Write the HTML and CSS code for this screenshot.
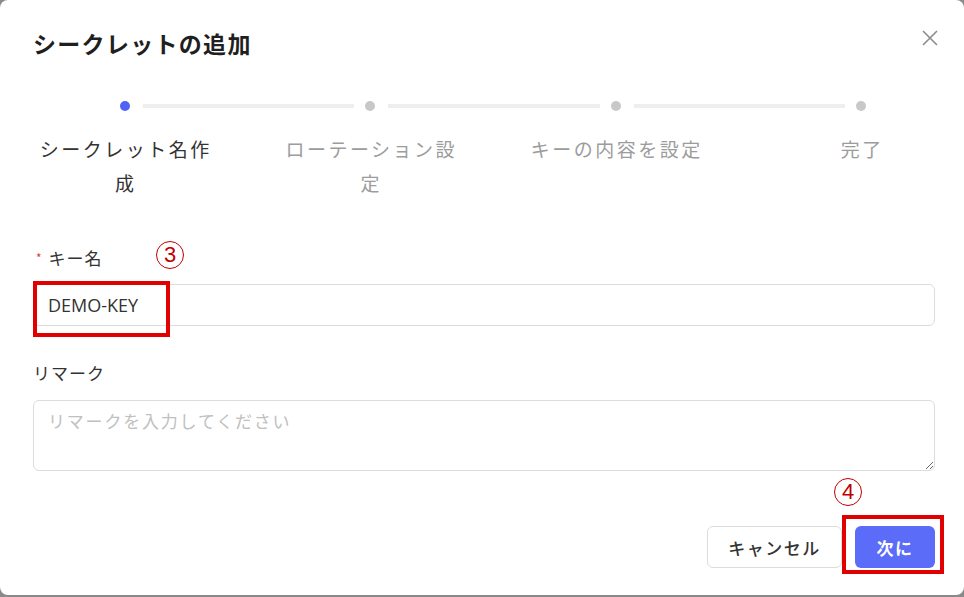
FILE: index.html
```html
<!DOCTYPE html>
<html lang="ja">
<head>
<meta charset="utf-8">
<title>シークレットの追加</title>
<link rel="stylesheet" href="styles.css">
</head>
<body>
<div class="dialog">
  <div class="header">
    <h1 class="title">シークレットの追加</h1>
    <svg class="close" width="16" height="16" viewBox="0 0 16 16"><path d="M1 1L15 15M15 1L1 15" stroke="#8c8c8c" stroke-width="1.6" fill="none"/></svg>
  </div>

  <div class="steps">
    <div class="track">
      <span class="dot active"></span><span class="line"></span>
      <span class="dot"></span><span class="line"></span>
      <span class="dot"></span><span class="line"></span>
      <span class="dot"></span>
    </div>
    <div class="labels">
      <div class="step-label active">シークレット名作成</div>
      <div class="step-label">ローテーション設定</div>
      <div class="step-label">キーの内容を設定</div>
      <div class="step-label">完了</div>
    </div>
  </div>

  <div class="field">
    <label class="field-label"><span class="req">*</span>キー名</label>
    <input class="input" type="text" value="DEMO-KEY">
  </div>

  <div class="field remark">
    <label class="field-label">リマーク</label>
    <textarea class="textarea" placeholder="リマークを入力してください"></textarea>
  </div>

  <div class="footer">
    <button class="btn btn-cancel">キャンセル</button>
    <button class="btn btn-primary">次に</button>
  </div>

  <span class="mark mark-3">3</span>
  <span class="mark mark-4">4</span>
  <span class="box box-key"></span>
  <span class="box box-next"></span>
</div>
</body>
</html>
```

FILE: styles.css
```css
html, body {
  margin: 0;
  padding: 0;
}
body {
  background: #8a8a8a;
  width: 964px;
  height: 597px;
  overflow: hidden;
  font-family: "Noto Sans CJK JP", "Noto Sans", sans-serif;
  color: #333;
}
.dialog {
  position: relative;
  box-sizing: border-box;
  width: 964px;
  height: 595px;
  background: #fff;
  border-radius: 8px;
  padding: 28px 29px 0 33px;
}
.header {
  display: flex;
  justify-content: space-between;
  align-items: center;
  margin-right: -3px;
}
.title {
  margin: 0;
  font-size: 23px;
  line-height: 30px;
  font-weight: 700;
  color: #1f1f1f;
  letter-spacing: 1.3px;
}
.close {
  margin-top: -10px;
}
.steps {
  margin-top: 43px;
}
.track {
  display: flex;
  align-items: center;
  margin-left: 87px;
  width: 746px;
  height: 10px;
}
.dot {
  width: 10px;
  height: 10px;
  border-radius: 50%;
  background: #c8c8c8;
  flex: none;
}
.dot.active {
  background: #4f62f5;
}
.line {
  flex: 1;
  height: 4px;
  background: #eeeeee;
  margin: 0 11px 0 13px;
}
.labels {
  display: grid;
  grid-template-columns: repeat(4, 245.5px);
  margin-left: -30px;
  margin-top: 21px;
}
.step-label {
  padding: 0 30px;
  text-align: center;
  font-size: 19px;
  line-height: 34px;
  letter-spacing: 2.5px;
  color: #9c9c9c;
}
.step-label.active {
  color: #333;
}
.field {
  margin-top: 45px;
  display: flex;
  flex-direction: column;
}
.remark {
  margin-top: 34px;
}
.field-label {
  font-size: 17px;
  line-height: 26px;
  color: #333;
  letter-spacing: 1px;
}
.req {
  color: #e04040;
  font-size: 12px;
  margin: 0 6px 0 3px;
  vertical-align: 2px;
}
.input {
  margin-top: 13px;
  box-sizing: border-box;
  height: 42px;
  border: 1px solid #dcdcdc;
  border-radius: 6px;
  padding: 0 14px;
  font-family: "Open Sans", "Noto Sans", sans-serif;
  font-size: 18px;
  color: #333;
  outline: none;
}
.textarea {
  margin-top: 14px;
  box-sizing: border-box;
  height: 71px;
  border: 1px solid #dcdcdc;
  border-radius: 6px;
  padding: 8px 14px;
  font-family: "Noto Sans CJK JP", sans-serif;
  font-size: 17px;
  letter-spacing: 1.8px;
  line-height: 24px;
  outline: none;
}
.textarea::placeholder {
  color: #c0c0c0;
}
.footer {
  display: flex;
  justify-content: flex-end;
  gap: 13px;
  margin-top: 55px;
}
.btn {
  box-sizing: border-box;
  height: 42px;
  border-radius: 6px;
  font-family: "Noto Sans CJK JP", sans-serif;
  font-size: 17px;
  letter-spacing: 1.5px;
  cursor: pointer;
}
.btn-cancel {
  width: 135px;
  border: 1px solid #dcdcdc;
  background: #fff;
  color: #333;
  font-weight: 500;
}
.btn-primary {
  width: 80px;
  border: none;
  background: #5b6cf9;
  color: #fff;
  font-weight: 700;
}
.mark {
  position: absolute;
  box-sizing: border-box;
  width: 28px;
  height: 28px;
  border: 1.5px solid #c00000;
  border-radius: 50%;
  color: #c00000;
  font-family: "Liberation Sans", sans-serif;
  font-size: 22px;
  line-height: 25px;
  text-align: center;
}
.mark-3 {
  left: 156px;
  top: 241px;
}
.mark-4 {
  left: 834px;
  top: 478px;
}
.box {
  position: absolute;
  box-sizing: border-box;
  border: 4px solid #e00000;
}
.box-key {
  left: 33px;
  top: 281px;
  width: 137px;
  height: 56px;
}
.box-next {
  left: 842px;
  top: 515px;
  width: 102px;
  height: 59px;
}
```
